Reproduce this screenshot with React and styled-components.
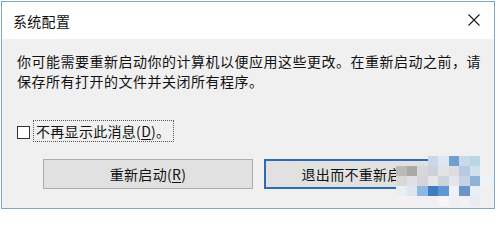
import styled, { createGlobalStyle } from "styled-components";

const GlobalStyle = createGlobalStyle`
  html, body {
    margin: 0;
    padding: 0;
    background: #fff;
  }
  body {
    font-family: "Noto Sans CJK SC", "Liberation Sans", sans-serif;
    color: #111;
  }
`;

// mosaic cells that blur the end of the second button (privacy pixelation)
const mosaic = [
  ["", "", "", "#c8d8ea", "#dfe6ef", "#6d9fcf", "#c9d9ec", "#b9d7e6", ""],
  ["#bdb9b4", "#a9a9a6", "#d8d8dc", "#cfd0d8", "#e3e3e6", "#dcdde2", "#b8c9e1", "#d0e0ee", ""],
  ["#d8d8d8", "#e0e0e4", "#d4d4da", "#e6e6ea", "#cfd3dc", "#e2e6ec", "#c6d3e4", "#8fb1d4", "#eef3f8"],
  ["#e8eef5", "#dbe6f1", "#8eb7e2", "#3d7cc3", "#5f97d4", "#eef2f7", "#6995ca", "#e6eef6", ""],
  ["#f6eef0", "#f3eef4", "#eef0f6", "#f2eef2", "#f6f6f8", "#eef0f4", "#f2f2f6", "#e8ecf2", ""],
];

const App = () => {
  return (
    <>
      <GlobalStyle />
      <Page>
        <Dialog>
          <TitleBar>
            <Title>系统配置</Title>
            <CloseButton aria-label="关闭">
              <svg width="12" height="12" viewBox="0 0 12 12">
                <path d="M0.5 0.5 L11.5 11.5 M11.5 0.5 L0.5 11.5" stroke="#1a1a1a" strokeWidth="1.1" fill="none" />
              </svg>
            </CloseButton>
          </TitleBar>
          <Body>
            <Message>
              你可能需要重新启动你的计算机以便应用这些更改。在重新启动之前，请
              <br />
              保存所有打开的文件并关闭所有程序。
            </Message>
            <CheckRow>
              <CheckBox />
              <CheckLabel>
                不再显示此消息(<u>D</u>)。
              </CheckLabel>
            </CheckRow>
            <ButtonRow>
              <DialogButton>
                重新启动(<u>R</u>)
              </DialogButton>
              <DialogButton $primary>
                退出而不重新启动(<u>N</u>)
              </DialogButton>
            </ButtonRow>
          </Body>
          <Mosaic>
            {mosaic.flat().map((c, i) => (
              <Cell key={i} style={{ background: c || "transparent" }} />
            ))}
          </Mosaic>
        </Dialog>
      </Page>
    </>
  );
};

const Page = styled.div`
  width: 500px;
  height: 213px;
  padding: 1px 0 0 1px;
  box-sizing: border-box;
`;

const Dialog = styled.div`
  position: relative;
  width: 494px;
  height: 208px;
  box-sizing: border-box;
  border: 1px solid #7fa7c4;
  display: flex;
  flex-direction: column;
  background: #f0f0f0;
`;

const TitleBar = styled.div`
  height: 37px;
  background: #fff;
  display: flex;
  align-items: center;
  justify-content: space-between;
  padding: 0 14px 0 11px;
`;

const Title = styled.div`
  font-size: 14px;
  letter-spacing: 0.3px;
  color: #111;
`;

const CloseButton = styled.div`
  display: flex;
  align-items: center;
  margin-top: -2px;
`;

const Body = styled.div`
  flex: 1;
  padding: 12px 18px 0 15px;
`;

const Message = styled.div`
  font-size: 14px;
  line-height: 20px;
  letter-spacing: 0.5px;
  white-space: nowrap;
`;

const CheckRow = styled.div`
  margin-top: 28px;
  height: 24px;
  display: flex;
  align-items: center;
`;

const CheckBox = styled.div`
  width: 13px;
  height: 13px;
  box-sizing: border-box;
  border: 1px solid #333;
  background: #fff;
  margin-top: 2px;
`;

const CheckLabel = styled.div`
  margin-left: 3px;
  font-size: 14px;
  line-height: 20px;
  padding: 0 3px 0 2px;
  border: 1px dotted #555;
  letter-spacing: 0.3px;

  u {
    text-underline-offset: 2px;
  }
`;

const ButtonRow = styled.div`
  margin-top: 16px;
  margin-left: 26px;
  display: flex;
  gap: 11px;
`;

const DialogButton = styled.div`
  width: 210px;
  height: 30px;
  box-sizing: border-box;
  display: flex;
  align-items: center;
  justify-content: center;
  font-size: 14px;
  letter-spacing: 0.3px;
  background: #e1e1e1;
  border: ${(p) => (p.$primary ? "2px solid #2b6cb3" : "1px solid #adadad")};
  color: #111;

  u {
    text-underline-offset: 2px;
  }
`;

const Mosaic = styled.div`
  position: absolute;
  left: 394px;
  top: 154px;
  display: grid;
  grid-template-columns: repeat(9, 10.5px);
  grid-auto-rows: 10px;
`;

const Cell = styled.div``;

export default App;
